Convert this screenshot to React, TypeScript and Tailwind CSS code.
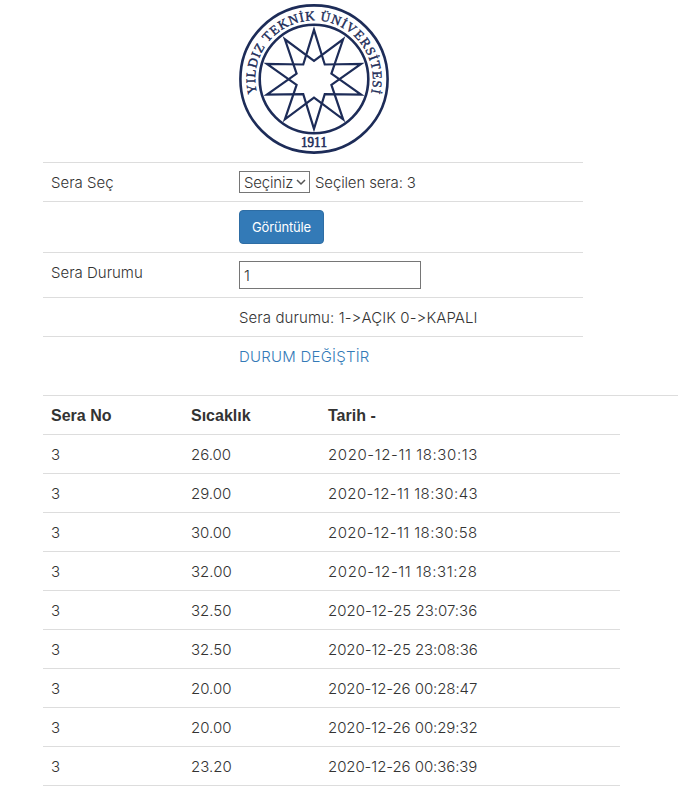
import React from "react";

const readings: [string, string, string, string][] = [
  ["3", "26.00", "2020-12-11 18:30:13", "tracking-[0.6px]"],
  ["3", "29.00", "2020-12-11 18:30:43", "tracking-[0.42px]"],
  ["3", "30.00", "2020-12-11 18:30:58", "tracking-[0.42px]"],
  ["3", "32.00", "2020-12-11 18:31:28", "tracking-[0.58px]"],
  ["3", "32.50", "2020-12-25 23:07:36", "tracking-normal"],
  ["3", "32.50", "2020-12-25 23:08:36", "tracking-[-0.05px]"],
  ["3", "20.00", "2020-12-26 00:28:47", "tracking-[-0.08px]"],
  ["3", "20.00", "2020-12-26 00:29:32", "tracking-[-0.08px]"],
  ["3", "23.20", "2020-12-26 00:36:39", "tracking-[-0.08px]"],
];

function star(turn: number): string {
  return Array.from({ length: 10 }, (_, i) => {
    const r = i % 2 === 0 ? 49.5 : 18.3;
    const a = ((turn + i * 36) * Math.PI) / 180;
    return `${(75 + r * Math.sin(a)).toFixed(2)},${(75.3 - r * Math.cos(a)).toFixed(2)}`;
  }).join(" ");
}

function Logo() {
  return (
    <svg width="150" height="150" viewBox="0 0 150 150" className="block" aria-label="Yıldız Teknik Üniversitesi">
      <defs>
        <path id="ring" d="M 17.9 89.2 A 58.8 58.8 0 1 1 132.1 89.2" />
      </defs>
      <g fill="none" stroke="#1d2c58">
        <circle cx="75" cy="75" r="73.6" strokeWidth="2.6" />
        <circle cx="75" cy="75" r="54.3" strokeWidth="2.6" />
        <polygon points={star(0)} strokeWidth="2.2" strokeMiterlimit="10" />
        <polygon points={star(180)} strokeWidth="2.2" strokeMiterlimit="10" />
      </g>
      <g fill="#1d2c58" stroke="#1d2c58" className="font-['Liberation_Serif',serif]">
        <text fontSize="13.2" strokeWidth="0.4">
          <textPath href="#ring" textLength="212" lengthAdjust="spacing">YILDIZ TEKNİK ÜNİVERSİTESİ</textPath>
        </text>
        <text x="75" y="142.9" fontSize="14" strokeWidth="0.6" textAnchor="middle" textLength="26" lengthAdjust="spacingAndGlyphs" className="[font-feature-settings:'kern'_0]">1911</text>
      </g>
    </svg>
  );
}

function FormRow({ label, className, children }: { label?: string; className: string; children: React.ReactNode }) {
  return (
    <div className={`flex border-t border-[#ddd] px-2 pt-2 ${className}`}>
      <div className="w-[188px] shrink-0">{label}</div>
      <div className="flex items-start">{children}</div>
    </div>
  );
}

export default function App() {
  return (
    <main className="h-[792px] w-[691px] overflow-hidden bg-white pl-[43px] pt-1 font-['Inter',sans-serif] text-[15px] leading-[23px] font-light text-[#333] [font-feature-settings:'calt'_0]">
      <section className="w-[540px]">
        <div className="h-[158px] pl-[196px]">
          <Logo />
        </div>
        <FormRow label="Sera Seç" className="h-[39px]">
          <button className="flex h-[22px] w-[71px] items-center justify-between border border-[#767676] bg-white pl-1 pr-[3px]">
            <span className="tracking-[-0.2px]">Seçiniz</span>
            <svg width="10" height="8" viewBox="0 0 10 8" fill="none" stroke="#555" strokeWidth="1.5">
              <path d="M1 2 L5 6 L9 2" />
            </svg>
          </button>
          <span className="ml-[5px] tracking-[-0.14px]">Seçilen sera: 3</span>
        </FormRow>
        <FormRow className="h-[51px]">
          <button className="h-[34px] w-[85px] rounded border border-[#2e6da4] bg-[#337ab7] text-[13px] leading-5 font-normal tracking-[-0.15px] text-white">Görüntüle</button>
        </FormRow>
        <FormRow label="Sera Durumu" className="h-[45px]">
          <input readOnly value="1" className="h-7 w-[182px] border border-[#767676] px-1 outline-none" />
        </FormRow>
        <FormRow className="h-[39px]">
          <span className="tracking-[0.09px]">Sera durumu: 1-&gt;AÇIK 0-&gt;KAPALI</span>
        </FormRow>
        <FormRow className="h-[59px]">
          <a className="tracking-[0.23px] text-[#337ab7]">DURUM DEĞİŞTİR</a>
        </FormRow>
      </section>
      <section>
        <div className="flex h-[39px] w-[635px] border-t border-[#ddd] px-2 pt-2 font-['Liberation_Sans',sans-serif] text-[16px] font-bold">
          <span className="w-[140px]">Sera No</span>
          <span className="w-[137px]">Sıcaklık</span>
          <span>Tarih -</span>
        </div>
        <div className="w-[577px] border-b border-[#ddd]">
          {readings.map(([no, temp, date, tracking]) => (
            <div key={date} className="flex h-[39px] border-t border-[#ddd] px-2 pt-2">
              <span className="w-[140px]">{no}</span>
              <span className="w-[137px]">{temp}</span>
              <span className={tracking}>{date}</span>
            </div>
          ))}
        </div>
      </section>
    </main>
  );
}
